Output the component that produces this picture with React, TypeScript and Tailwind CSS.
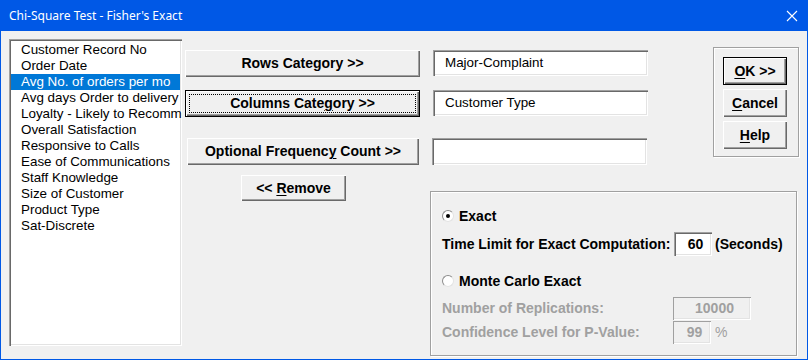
import React from "react"

const fields = [
  "Customer Record No",
  "Order Date",
  "Avg No. of orders per mo",
  "Avg days Order to delivery",
  "Loyalty - Likely to Recommend",
  "Overall Satisfaction",
  "Responsive to Calls",
  "Ease of Communications",
  "Staff Knowledge",
  "Size of Customer",
  "Product Type",
  "Sat-Discrete",
]

const raised =
  "bg-[#f0f0f0] shadow-[inset_1px_1px_#ffffff,inset_-1px_-1px_#696969,inset_-2px_-2px_#a0a0a0]"
const sunken =
  "shadow-[inset_1px_1px_#a0a0a0,inset_2px_2px_#696969,inset_-1px_-1px_#ffffff,inset_-2px_-2px_#e3e3e3]"
const sunkenOff =
  "shadow-[inset_1px_1px_#a0a0a0,inset_-1px_-1px_#ffffff,inset_-2px_-2px_#e3e3e3]"

function Btn({
  children,
  className = "",
  isDefault = false,
  focus = false,
}: {
  children: React.ReactNode
  className?: string
  isDefault?: boolean
  focus?: boolean
}) {
  return (
    <div
      className={`flex items-center justify-center text-[14px] font-bold text-black ${raised} ${
        isDefault ? "border border-black" : ""
      } ${focus ? "outline-1 outline-dotted outline-black outline-offset-[-5px]" : ""} ${className}`}
    >
      {children}
    </div>
  )
}

function TextBox({ value, className = "" }: { value: string; className?: string }) {
  return (
    <div
      className={`flex items-center bg-white pl-[12px] text-[13.4px] text-black ${sunken} ${className}`}
    >
      {value}
    </div>
  )
}

function Radio({ checked }: { checked: boolean }) {
  return (
    <span className="flex h-[12px] w-[12px] items-center justify-center rounded-full border border-[#8c8c8c] border-b-[#e3e3e3] border-r-[#e3e3e3] bg-white">
      {checked && <span className="h-[4px] w-[4px] rounded-full bg-black" />}
    </span>
  )
}

export default function App() {
  return (
    <div
      className="flex h-[360px] w-[808px] flex-col bg-[#0058e6]"
      style={{ fontFamily: '"Liberation Sans", Arial, sans-serif' }}
    >
      <div className="flex h-[31px] items-center justify-between pl-[9px] pr-[10px] text-white">
        <span className="text-[12px]" style={{ fontFamily: '"Noto Sans", sans-serif' }}>
          Chi-Square Test - Fisher's Exact
        </span>
        <svg width="12" height="12" viewBox="0 0 12 12">
          <path d="M1 1 L11 11 M11 1 L1 11" stroke="#ffffff" strokeWidth="1.1" />
        </svg>
      </div>

      <div className="mx-px mb-px flex flex-1 bg-[#f0f0f0] pl-[8px] pt-[8px]">
        {/* field list */}
        <div className={`h-[307px] w-[173px] overflow-hidden bg-white pl-[2px] pr-[2px] pt-[3px] ${sunken}`}>
          {fields.map((f, i) => (
            <div
              key={f}
              className={`h-[16px] whitespace-nowrap pl-[10px] text-[13.4px] leading-[16px] ${
                i === 2 ? "bg-[#0078d7] text-white" : "text-black"
              }`}
            >
              {f}
            </div>
          ))}
        </div>

        <div className="ml-[3px] flex flex-col">
          <div className="flex">
            <div className="flex flex-col pt-[11px]">
              <div className="flex">
                <Btn className="h-[27px] w-[235px]">Rows Category &gt;&gt;</Btn>
                <TextBox value="Major-Complaint" className="ml-[13px] h-[26px] w-[215px]" />
              </div>
              <div className="mt-[13px] flex">
                <Btn className="h-[27px] w-[235px]" isDefault focus>
                  <span>
                    Columns Cate<u className="underline-offset-2">g</u>ory &gt;&gt;
                  </span>
                </Btn>
                <TextBox value="Customer Type" className="ml-[13px] h-[26px] w-[215px]" />
              </div>
              <div className="mt-[21px] flex">
                <Btn className="ml-[2px] h-[27px] w-[232px]">
                  <span>
                    Optional Frequenc<u className="underline-offset-2">y</u> Count &gt;&gt;
                  </span>
                </Btn>
                <TextBox value="" className="ml-[13px] h-[27px] w-[215px]" />
              </div>
            </div>

            <div className="ml-[65px] mt-[8px] flex h-[110px] w-[86px] flex-col border border-[#a0a0a0] pl-[9px] pt-[9px] shadow-[inset_1px_1px_#ffffff,1px_1px_#ffffff]">
              <Btn className="h-[28px] w-[64px]" isDefault>
                <span>
                  <u className="underline-offset-2">O</u>K &gt;&gt;
                </span>
              </Btn>
              <Btn className="mt-[4px] h-[28px] w-[64px]">
                <span>
                  <u className="underline-offset-2">C</u>ancel
                </span>
              </Btn>
              <Btn className="mt-[4px] h-[28px] w-[64px]">
                <span>
                  <u className="underline-offset-2">H</u>elp
                </span>
              </Btn>
            </div>
          </div>

          <div className="flex items-start">
            <Btn className="ml-[56px] mt-[10px] h-[26px] w-[105px]">
              <span>
                &lt;&lt; <u className="underline-offset-2">R</u>emove
              </span>
            </Btn>

            <div className="ml-[84px] mt-[26px] flex h-[165px] w-[367px] flex-col border border-[#a0a0a0] pl-[11px] pt-[17px] text-[14px] font-bold text-black shadow-[inset_1px_1px_#ffffff,1px_1px_#ffffff]">
              <div className="flex h-[14px] items-center">
                <Radio checked />
                <span className="ml-[5px]">Exact</span>
              </div>
              <div className="mt-[9px] flex h-[24px] items-center">
                <span className="w-[232px]">Time Limit for Exact Computation:</span>
                <div className={`flex h-[24px] w-[38px] items-center justify-center bg-white pl-[5px] ${sunken}`}>
                  60
                </div>
                <span className="ml-[3px]">(Seconds)</span>
              </div>
              <div className="mt-[18px] flex h-[14px] items-center">
                <Radio checked={false} />
                <span className="ml-[5px]">Monte Carlo Exact</span>
              </div>
              <div className="mt-[9px] flex h-[23px] items-center text-[#a0a0a0]">
                <span className="w-[231px]">Number of Replications:</span>
                <div className={`flex h-[23px] w-[78px] items-center justify-center pl-[5px] ${sunkenOff}`}>
                  10000
                </div>
              </div>
              <div className="mt-[1px] flex h-[23px] items-center text-[#a0a0a0]">
                <span className="w-[231px]">Confidence Level for P-Value:</span>
                <div className={`flex h-[23px] w-[38px] items-center justify-center pl-[5px] ${sunkenOff}`}>
                  99
                </div>
                <span className="ml-[4px] font-normal">%</span>
              </div>
            </div>
          </div>
        </div>
      </div>
    </div>
  )
}
